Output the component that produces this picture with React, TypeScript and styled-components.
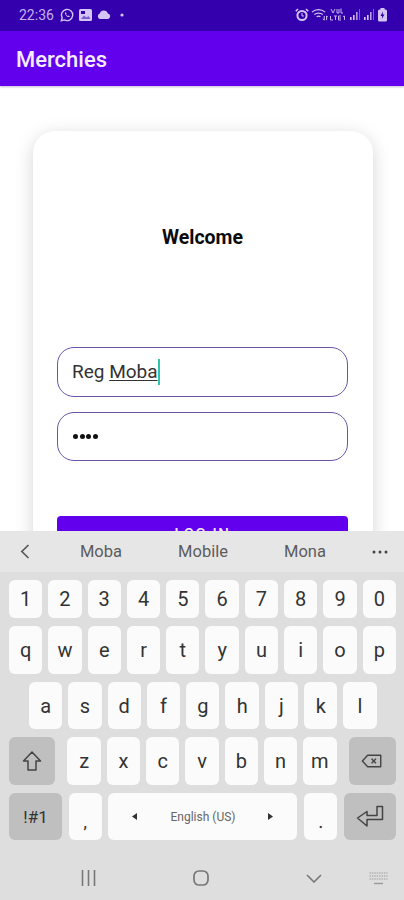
import React from 'react';
import styled, { createGlobalStyle } from 'styled-components';

const GlobalStyle = createGlobalStyle`
  html, body { margin: 0; padding: 0; background: #fff; }
  body { font-family: Roboto, "Liberation Sans", sans-serif; }
`;

const Screen = styled.div`
  width: 404px;
  height: 900px;
  display: flex;
  flex-direction: column;
  overflow: hidden;
  background: #fff;
`;

const StatusBar = styled.div`
  height: 31px;
  flex: none;
  display: flex;
  align-items: center;
  padding: 0 16px 2px 19px;
  box-sizing: border-box;
  background: #3400ad;
  color: #c4b2ec;
`;

const Clock = styled.span`
  font-size: 14px;
  margin-right: 1px;
`;

const StatusGroup = styled.div`
  display: flex;
  align-items: center;
  gap: 5px;
`;

const StatusRight = styled(StatusGroup)`
  margin-left: auto;
  gap: 2px;
`;

const AppBar = styled.header`
  height: 55px;
  flex: none;
  display: flex;
  align-items: center;
  padding: 2px 0 0 16px;
  box-sizing: border-box;
  background: #6200ee;
  color: #f4edff;
  font-size: 22px;
  font-weight: 500;
  box-shadow: 0 1px 2px rgba(60, 20, 120, 0.3);
`;

const Content = styled.main`
  flex: 1;
  min-height: 0;
  padding: 45px 31px 0 33px;
  overflow: hidden;
`;

const Card = styled.section`
  height: 460px;
  box-sizing: border-box;
  padding: 96px 25px 0 24px;
  background: #fff;
  border-radius: 22px;
  box-shadow: 0 4px 18px rgba(0, 0, 0, 0.17);
`;

const Title = styled.h1`
  margin: 0 0 98px;
  height: 22px;
  line-height: 22px;
  text-align: center;
  font-size: 19.5px;
  font-weight: 700;
  color: #0c0c0c;
`;

const Field = styled.div`
  height: 49.5px;
  box-sizing: border-box;
  margin-bottom: 15px;
  padding-left: 14px;
  display: flex;
  align-items: center;
  border: 1.5px solid #6a55a8;
  border-radius: 17px;
  font-size: 19px;
  color: #333;
`;

const Composing = styled.span`
  text-decoration: underline;
  text-underline-offset: 2px;
  text-decoration-thickness: 1px;
`;

const Caret = styled.span`
  display: inline-block;
  width: 2px;
  height: 26px;
  background: #2fc4ae;
`;

const Dots = styled.div`
  display: flex;
  gap: 1.5px;
  padding-left: 1px;
`;

const Dot = styled.span`
  width: 5px;
  height: 5px;
  border-radius: 50%;
  background: #111;
`;

const LoginButton = styled.button`
  display: block;
  width: 100%;
  height: 36px;
  margin-top: 55px;
  padding: 0;
  border: 0;
  border-radius: 4px;
  background: #6200ee;
  color: #f0e8ff;
  font: 500 15px Roboto, sans-serif;
  letter-spacing: 1.5px;
`;

const Keyboard = styled.div`
  height: 369px;
  flex: none;
  display: flex;
  flex-direction: column;
  background: #dedede;
  position: relative;
`;

const Suggestions = styled.div`
  height: 41px;
  flex: none;
  display: grid;
  grid-template-columns: 50px 102px 102px 102px 48px;
  align-items: center;
  background: #e6e6e6;
  color: #5c5c5c;
  font-size: 16.5px;
  text-align: center;
`;

const SuggestIcon = styled.div`
  display: flex;
  justify-content: center;
  align-items: center;
`;

const Rows = styled.div`
  display: flex;
  flex-direction: column;
  gap: 8px;
  padding: 8px 8px 0 9px;
`;

const Row = styled.div<{ $h: number; $pad?: number }>`
  height: ${p => p.$h}px;
  display: flex;
  gap: 6px;
  padding-left: ${p => p.$pad ?? 0}px;
`;

const SplitRow = styled(Row)`
  justify-content: space-between;
  gap: 0;
`;

const KeyGroup = styled.div`
  display: flex;
  gap: 6px;
`;

const Key = styled.div<{ $w?: number; $dark?: boolean; $size?: number }>`
  width: ${p => p.$w ?? 33.3}px;
  flex: none;
  display: flex;
  align-items: center;
  justify-content: center;
  border-radius: 6px;
  background: ${p => (p.$dark ? '#bfbfbf' : '#fbfbfb')};
  color: #333;
  font-size: ${p => p.$size ?? 20}px;
`;

const PunctKey = styled(Key)`
  align-items: flex-end;
  padding-bottom: 9px;
  box-sizing: border-box;
  font-weight: 700;
  font-size: 14px;
`;

const SpaceKey = styled(Key)`
  justify-content: space-between;
  padding: 0 24px;
  box-sizing: border-box;
  font-size: 12px;
  color: #666;
`;

const NavBar = styled.nav`
  flex: 1;
  display: flex;
  align-items: center;
  padding: 16px 0 0 81px;
`;

const NavButtons = styled.div`
  display: flex;
  align-items: center;
  gap: 97px;
`;

const KeyboardHint = styled.div`
  display: flex;
  margin-left: 47px;
`;

const Shift = () => (
  <svg width="20" height="22" viewBox="0 0 20 22" fill="none" stroke="#444" strokeWidth="1.5" strokeLinejoin="round">
    <path d="M10 2 L18.5 11 H14 V20 H6 V11 H1.5 Z" />
  </svg>
);

const Backspace = () => (
  <svg width="22" height="14" viewBox="0 0 24 16" fill="none" stroke="#444" strokeWidth="1.6" strokeLinejoin="round">
    <path d="M7 1.5 H22 V14.5 H7 L1 8 Z" />
    <path d="M11.5 5.5 L16.5 10.5 M16.5 5.5 L11.5 10.5" />
  </svg>
);

const Enter = () => (
  <svg width="28" height="23" viewBox="0 0 28 23" fill="none" stroke="#444" strokeWidth="1.5" strokeLinejoin="round">
    <path d="M21 1.5 H26.5 V14.5 H11 V21 L1.5 13 L11 6.5 V10.5 H21 Z" />
  </svg>
);

const Triangle = ({ left }: { left?: boolean }) => (
  <svg width="5" height="7" viewBox="0 0 5 7" fill="#333">
    <path d={left ? 'M5 0 V7 L0 3.5 Z' : 'M0 0 V7 L5 3.5 Z'} />
  </svg>
);

const WhatsApp = () => (
  <svg width="14" height="14" viewBox="0 0 14 14" fill="none" stroke="#d4c6f4" strokeWidth="1.4">
    <path d="M1.3 12.7 L2.2 9.7 A5.6 5.6 0 1 1 4.4 11.9 Z" />
    <path d="M5 4.4 C4.6 6.6 7.2 9.4 9.6 9 L9.6 8 L8.4 7.4 L7.8 8 C7 7.6 6.4 7 6 6.2 L6.6 5.6 L6 4.4 Z" fill="#d4c6f4" stroke="none" />
  </svg>
);

const PictureIcon = () => (
  <svg width="13" height="12" viewBox="0 0 13 12">
    <rect width="13" height="12" rx="1.5" fill="#d4c6f4" />
    <rect x="2" y="2" width="4" height="3" fill="#3400ad" />
    <path d="M2 10 L5 6.5 L7.5 8.5 L9.5 7 L11.5 10 Z" fill="#3400ad" opacity=".55" />
  </svg>
);

const CloudIcon = () => (
  <svg width="14" height="9" viewBox="0 0 14 9" fill="#d4c6f4">
    <path d="M3 9 A2.8 2.8 0 0 1 2.8 3.6 A4.2 4.2 0 0 1 10.8 3.4 A2.9 2.9 0 0 1 11.2 9 Z" />
  </svg>
);

const AlarmIcon = () => (
  <svg width="14" height="14" viewBox="0 0 14 14" fill="none" stroke="#d4c6f4">
    <circle cx="7" cy="7.5" r="4.6" strokeWidth="2" />
    <path d="M7 5 V8 H9" strokeWidth="1" />
    <path d="M0.8 3.2 L3 1 M13.2 3.2 L11 1" strokeWidth="1.6" />
  </svg>
);

const WifiIcon = () => (
  <svg width="17" height="13" viewBox="0 0 18 13" fill="none" stroke="#d4c6f4" strokeWidth="1.3">
    <path d="M1 4 C5 0.5 11 0.5 15 4" />
    <path d="M3.5 6.5 C6 4.5 10 4.5 12.5 6.5" />
    <path d="M6 9 C7.2 8 8.8 8 10 9" />
    <path d="M14 8 V12.5 M12.5 11 L14 12.5 M16.5 12.5 V8 M16.5 8 L18 9.5" strokeWidth="1" />
  </svg>
);

const VolteIcon = () => (
  <svg width="17" height="13" viewBox="0 0 17 13" fill="none" stroke="#c4b2ec" strokeWidth="1">
    <path d="M1 1 L3 5 L5 1 M7 1 V5 H9 V1 M11 0.5 V5 H13" />
    <path d="M0.5 8 V12 H3 M4 8 H7 M5.5 8 V12 M8.5 8 V12 M8.5 8 H11 M8.5 10 H11 M8.5 12 H11 M13 8.5 L14.5 8 V12" />
  </svg>
);

const SignalIcon = () => (
  <svg width="12" height="13" viewBox="0 0 12 13" fill="#d4c6f4">
    <rect x="1" y="9" width="1.6" height="3" />
    <rect x="4" y="7" width="1.6" height="5" />
    <rect x="7" y="4" width="1.6" height="8" opacity=".8" />
    <rect x="10" y="1" width="1" height="11" opacity=".45" />
  </svg>
);

const BatteryIcon = () => (
  <svg width="11" height="14" viewBox="0 0 11 14">
    <rect x="3.5" y="0" width="4" height="2" fill="#d4c6f4" />
    <rect x="1" y="1.5" width="9" height="12" rx="1.5" fill="#d4c6f4" />
    <path d="M5.8 3.5 L3.5 8 H5.2 L4.8 11 L7.5 6.5 H5.8 Z" fill="#3400ad" />
  </svg>
);

const numbers = ['1', '2', '3', '4', '5', '6', '7', '8', '9', '0'];
const topRow = ['q', 'w', 'e', 'r', 't', 'y', 'u', 'i', 'o', 'p'];
const midRow = ['a', 's', 'd', 'f', 'g', 'h', 'j', 'k', 'l'];
const lowRow = ['z', 'x', 'c', 'v', 'b', 'n', 'm'];

export default function App() {
  return (
    <Screen>
      <GlobalStyle />
      <StatusBar>
        <StatusGroup>
          <Clock>22:36</Clock>
          <WhatsApp />
          <PictureIcon />
          <CloudIcon />
          <svg width="16" height="4" viewBox="0 0 16 4" fill="#d4c6f4"><circle cx="6" cy="2" r="1.6" /></svg>
        </StatusGroup>
        <StatusRight>
          <AlarmIcon />
          <WifiIcon />
          <VolteIcon />
          <SignalIcon />
          <SignalIcon />
          <BatteryIcon />
        </StatusRight>
      </StatusBar>
      <AppBar>Merchies</AppBar>
      <Content>
        <Card>
          <Title>Welcome</Title>
          <Field>
            Reg&nbsp;<Composing>Moba</Composing>
            <Caret />
          </Field>
          <Field>
            <Dots>
              <Dot /><Dot /><Dot /><Dot />
            </Dots>
          </Field>
          <LoginButton>LOG IN</LoginButton>
        </Card>
      </Content>
      <Keyboard>
        <Suggestions>
          <SuggestIcon>
            <svg width="10" height="15" viewBox="0 0 10 15" fill="none" stroke="#555" strokeWidth="1.6">
              <path d="M8.5 1 L1.8 7.5 L8.5 14" />
            </svg>
          </SuggestIcon>
          <span>Moba</span>
          <span>Mobile</span>
          <span>Mona</span>
          <SuggestIcon>
            <svg width="16" height="4" viewBox="0 0 16 4" fill="#444">
              <circle cx="2" cy="2" r="1.5" /><circle cx="8" cy="2" r="1.5" /><circle cx="14" cy="2" r="1.5" />
            </svg>
          </SuggestIcon>
        </Suggestions>
        <Rows>
          <Row $h={38}>
            {numbers.map(k => <Key key={k}>{k}</Key>)}
          </Row>
          <Row $h={48}>
            {topRow.map(k => <Key key={k}>{k}</Key>)}
          </Row>
          <Row $h={47} $pad={20}>
            {midRow.map(k => <Key key={k}>{k}</Key>)}
          </Row>
          <SplitRow $h={48}>
            <Key $w={46} $dark><Shift /></Key>
            <KeyGroup>
              {lowRow.map(k => <Key key={k}>{k}</Key>)}
            </KeyGroup>
            <Key $w={47} $dark><Backspace /></Key>
          </SplitRow>
          <SplitRow $h={47}>
            <Key $w={53} $dark $size={17}>!#1</Key>
            <PunctKey>,</PunctKey>
            <SpaceKey $w={189}>
              <Triangle left />
              English (US)
              <Triangle />
            </SpaceKey>
            <PunctKey>.</PunctKey>
            <Key $w={52} $dark><Enter /></Key>
          </SplitRow>
        </Rows>
        <NavBar>
          <NavButtons>
            <svg width="15" height="16" viewBox="0 0 15 16" stroke="#777" strokeWidth="1.6">
              <path d="M1.5 0 V16 M7.5 0 V16 M13.5 0 V16" />
            </svg>
            <svg width="16" height="16" viewBox="0 0 16 16" fill="none" stroke="#777" strokeWidth="1.7">
              <rect x="1" y="1" width="14" height="14" rx="5" />
            </svg>
            <svg width="16" height="9" viewBox="0 0 16 9" fill="none" stroke="#777" strokeWidth="1.6">
              <path d="M1 1 L8 8 L15 1" />
            </svg>
          </NavButtons>
          <KeyboardHint>
            <svg width="19" height="13" viewBox="0 0 19 13" fill="none" stroke="#999" strokeWidth="1" strokeDasharray="1.4 1">
              <path d="M0.5 1 H18.5 M0.5 4 H18.5 M0.5 7 H18.5" />
              <path d="M5 11.5 H14" strokeDasharray="none" strokeWidth="1.4" />
            </svg>
          </KeyboardHint>
        </NavBar>
      </Keyboard>
    </Screen>
  );
}
